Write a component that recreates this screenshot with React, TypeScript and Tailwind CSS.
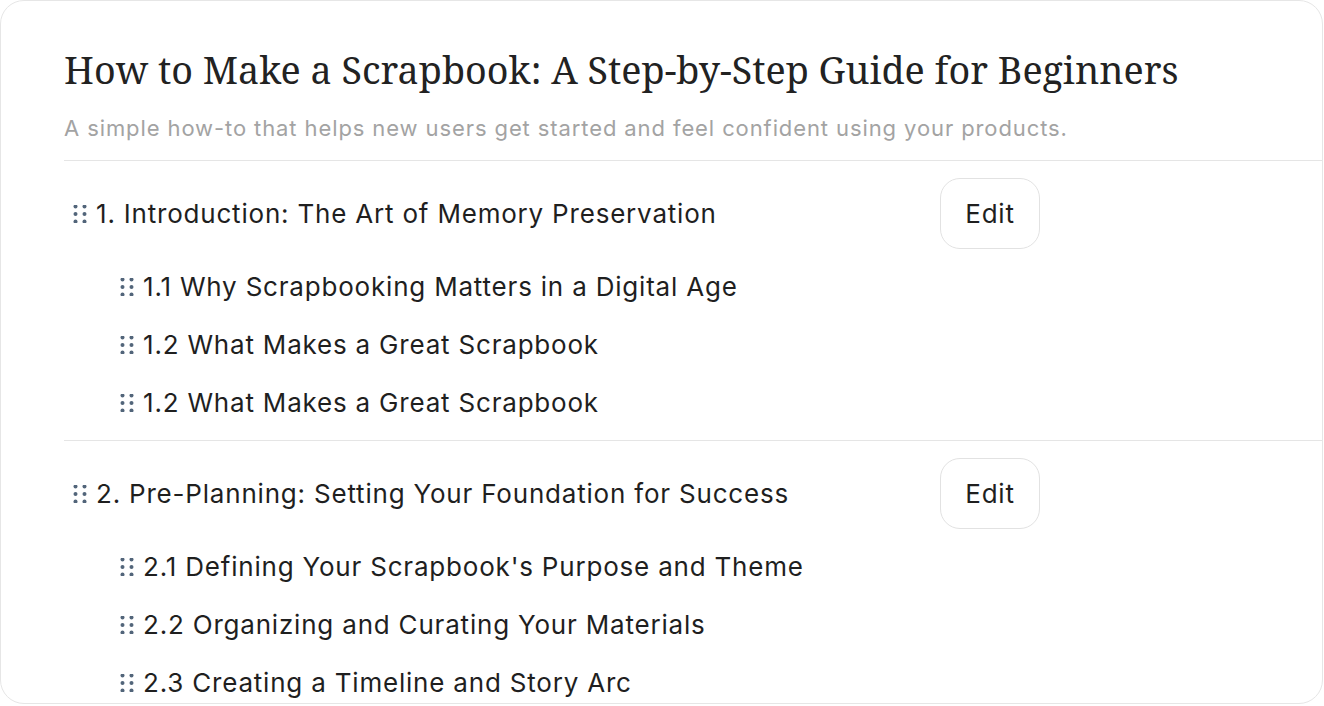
import React from "react";

function Grip() {
  return (
    <svg width="14" height="18" viewBox="0 0 14 18" className="shrink-0">
      {[2.5, 11.5].map((cx) =>
        [1.5, 9, 16.5].map((cy) => (
          <circle key={`${cx}-${cy}`} cx={cx} cy={cy} r={2} fill="#52657a" />
        ))
      )}
    </svg>
  );
}

const sections = [
  {
    title: "1. Introduction: The Art of Memory Preservation",
    items: [
      "1.1 Why Scrapbooking Matters in a Digital Age",
      "1.2 What Makes a Great Scrapbook",
      "1.2 What Makes a Great Scrapbook",
    ],
  },
  {
    title: "2. Pre-Planning: Setting Your Foundation for Success",
    items: [
      "2.1 Defining Your Scrapbook's Purpose and Theme",
      "2.2 Organizing and Curating Your Materials",
      "2.3 Creating a Timeline and Story Arc",
    ],
  },
];

export default function App() {
  return (
    <div className="w-[1324px] h-[706px] bg-white overflow-hidden">
      <div className="h-[704px] w-[1323px] rounded-[24px] border border-[#e6e6e6] bg-white overflow-hidden pl-[63px] font-['Inter','Noto_Sans',sans-serif]">
        <h1 className="mt-[45px] font-['Noto_Serif','DejaVu_Serif',serif] text-[37.7px] leading-[48px] text-[#222222]">
          How to Make a Scrapbook: A Step-by-Step Guide for Beginners
        </h1>
        <p className="mt-[18px] text-[22px] leading-[32px] tracking-[0.9px] text-[#a3a3a3] whitespace-nowrap">
          A simple how-to that helps new users get started and feel confident using your products.
        </p>
        {sections.map((s, i) => (
          <div key={i} className={i === 0 ? "mt-[16px] border-t border-[#e5e5e5]" : "border-t border-[#e5e5e5]"}>
            <div className="pt-[17px] pb-[8px]">
              <div className="flex w-[976px] items-center justify-between">
                <div className="flex items-center gap-[9px] pl-[9px]">
                  <Grip />
                  <span className="text-[26px] leading-[32px] tracking-[0.8px] text-[#1f1f1f] whitespace-nowrap">
                    {s.title}
                  </span>
                </div>
                <button className="h-[71px] w-[100px] rounded-[20px] border border-[#e2e2e2] bg-white text-[26px] tracking-[0.8px] text-[#1f1f1f]">
                  Edit
                </button>
              </div>
              <div className="mt-[9px] flex flex-col">
                {s.items.map((t, j) => (
                  <div key={j} className="flex h-[58px] items-center gap-[9px] pl-[56px]">
                    <Grip />
                    <span className="text-[26px] leading-[32px] tracking-[0.8px] text-[#1f1f1f] whitespace-nowrap">
                      {t}
                    </span>
                  </div>
                ))}
              </div>
            </div>
          </div>
        ))}
      </div>
    </div>
  );
}
